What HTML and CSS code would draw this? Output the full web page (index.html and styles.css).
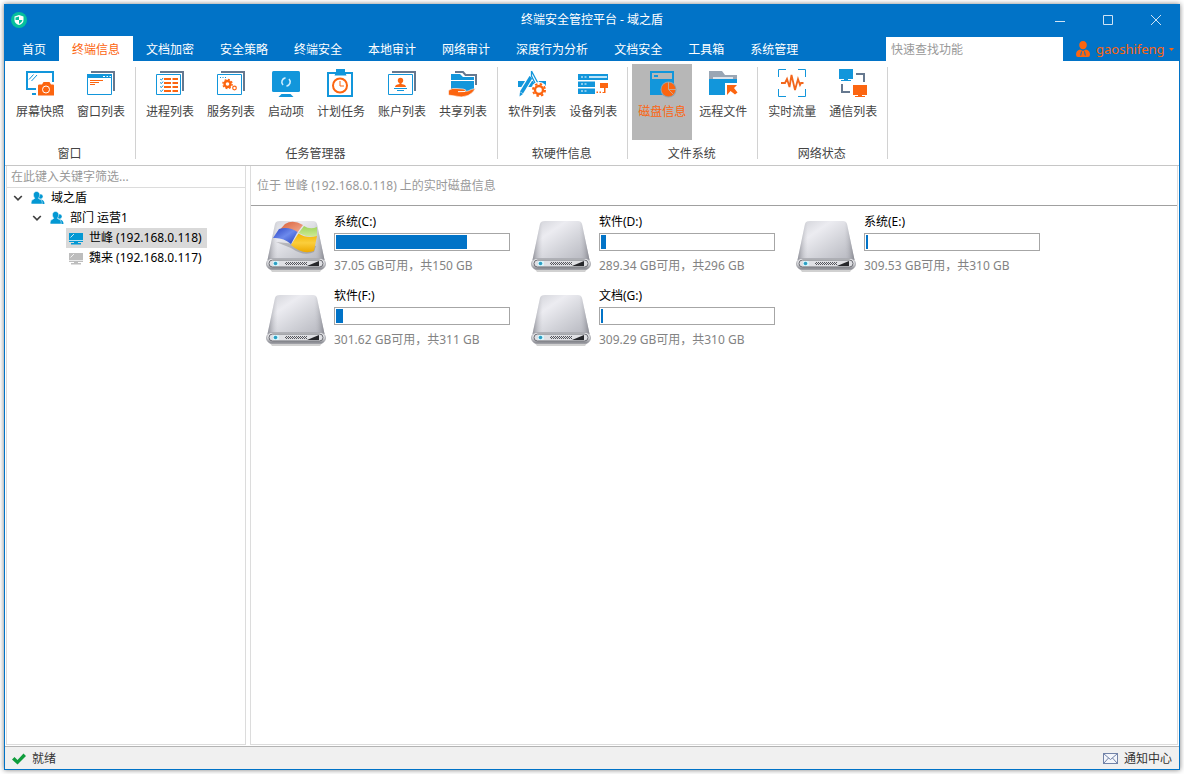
FILE: index.html
```html
<!DOCTYPE html>
<html lang="zh-CN">
<head>
<meta charset="utf-8">
<title>终端安全管控平台 - 域之盾</title>
<link rel="stylesheet" href="styles.css">
</head>
<body>
<svg class="defs" aria-hidden="true">
  <defs>
    <linearGradient id="metal" x1="0" y1="0" x2="1" y2="1">
      <stop offset="0" stop-color="#cfd0d6"/><stop offset=".3" stop-color="#ececf1"/><stop offset=".6" stop-color="#d3d4da"/><stop offset="1" stop-color="#b4b5bd"/>
    </linearGradient>
    <linearGradient id="side" x1="0" y1="0" x2="1" y2="0">
      <stop offset="0" stop-color="#8d8e96"/><stop offset=".18" stop-color="#c4c5cb" stop-opacity="0"/><stop offset=".82" stop-color="#c4c5cb" stop-opacity="0"/><stop offset="1" stop-color="#85868e"/>
    </linearGradient>
    <linearGradient id="front" x1="0" y1="0" x2="0" y2="1">
      <stop offset="0" stop-color="#f4f4f6"/><stop offset=".5" stop-color="#d5d6da"/><stop offset="1" stop-color="#808188"/>
    </linearGradient>
    <linearGradient id="wr" x1="0" y1="0" x2="1" y2="1"><stop offset="0" stop-color="#d95f38"/><stop offset="1" stop-color="#f3b096"/></linearGradient>
    <linearGradient id="wg" x1="0" y1="0" x2="0" y2="1"><stop offset="0" stop-color="#9fd35c"/><stop offset="1" stop-color="#cdea94"/></linearGradient>
    <linearGradient id="wb" x1="0" y1="0" x2="1" y2="1"><stop offset="0" stop-color="#2a44c4"/><stop offset=".5" stop-color="#6d8aec"/><stop offset="1" stop-color="#2440bd"/></linearGradient>
    <linearGradient id="wy" x1="0" y1="0" x2="0" y2="1"><stop offset="0" stop-color="#f0b400"/><stop offset=".5" stop-color="#fbce3c"/><stop offset="1" stop-color="#eda900"/></linearGradient>
    <pattern id="mesh" width="2" height="2" patternUnits="userSpaceOnUse"><rect width="1" height="1" fill="#55565c"/><rect x="1" y="1" width="1" height="1" fill="#55565c"/></pattern>
    <symbol id="drive" viewBox="0 0 60 54">
      <path d="M3 50h54l-3 4H6z" fill="#000" opacity=".18"/>
      <path d="M11 3.500Q11.500 3 14 3H47Q50 3 51 6L58.500 42H1.500L9 6Q9.500 4 11 3.500z" fill="url(#metal)"/>
      <path d="M11 3.500Q11.500 3 14 3H47Q50 3 51 6L58.500 42H1.500L9 6Q9.500 4 11 3.500z" fill="url(#side)"/>
      <rect x=".5" y="40.500" width="59" height="11" rx="5.500" fill="url(#front)" stroke="#9a9ba2" stroke-width=".7"/>
      <rect x="3" y="42" width="54" height="7" rx="3.500" fill="#dfe0e4" stroke="#6d6e75" stroke-width="1"/>
      <rect x="7" y="43" width="6" height="5" rx="1" fill="#d8f5fb"/><circle cx="9.500" cy="45.500" r="1.800" fill="#2a9fc4"/>
      <rect x="19" y="44" width="22" height="3" fill="url(#mesh)"/>
      <path d="M41 48L53 43V48z" fill="#26272b"/>
    </symbol>
    <symbol id="users" viewBox="0 0 14 14">
      <circle cx="9.500" cy="5.500" r="2.300" fill="#0398d3"/><path d="M8 8.500Q13.500 8 13.500 13H8z" fill="#0398d3"/>
      <path d="M5.500 .500C7.600 .500 8.800 2 8.700 4C8.600 5.600 7.800 6.600 7.400 7.200C7.600 8.300 11.200 8.200 11.200 11.400V13H.200V11.400C.200 8.200 3.600 8.300 3.800 7.200C3.200 6.600 2.400 5.500 2.400 4C2.400 2 3.600 .500 5.500 .500z" fill="#0398d3" stroke="#fff" stroke-width=".5"/>
    </symbol>
    <symbol id="pc" viewBox="0 0 14 13">
      <path d="M0 1H14V9H0z" fill="currentColor"/><path d="M1.500 5.500L5 2" stroke="#fff" stroke-width="1" opacity=".8"/><path d="M0 8.500H14" stroke="#fff" stroke-width="1" opacity=".7"/>
      <path d="M0 9H14V10H9V11H12V12.500H2V11H5V10H0z" fill="currentColor"/>
    </symbol>
    <symbol id="chev" viewBox="0 0 10 8"><path d="M1.200 2L5 5.800L8.800 2" fill="none" stroke="#404040" stroke-width="1.700"/></symbol>
  </defs>
</svg>
<div class="window">
  <header class="top">
    <div class="titlebar">
      <svg class="logo" width="16" height="16" viewBox="0 0 16 16" aria-hidden="true"><circle cx="8" cy="8" r="8" fill="#05bf9c"/><path d="M8 3L12.500 4.500V8Q12.500 11.500 8 13Q3.500 11.500 3.500 8V4.500z" fill="#fff"/><path d="M8 4.600V8H4.500V5.600zM8 8H11.500Q11 10.500 8 12z" fill="#05bf9c"/></svg>
      <h1 class="title">终端安全管控平台 - 域之盾</h1>
      <div class="winbtns">
        <button class="winbtn" aria-label="最小化"><svg width="10" height="10" viewBox="0 0 10 10"><path d="M0 6.500H10"/></svg></button>
        <button class="winbtn" aria-label="最大化"><svg width="10" height="10" viewBox="0 0 10 10"><path d="M.500 .500H9.500V9.500H.500z"/></svg></button>
        <button class="winbtn" aria-label="关闭"><svg width="10" height="10" viewBox="0 0 10 10"><path d="M0 0L10 10M10 0L0 10"/></svg></button>
      </div>
    </div>
    <div class="menubar">
      <nav class="tabs">
        <button class="tab">首页</button><button class="tab active">终端信息</button><button class="tab">文档加密</button><button class="tab">安全策略</button><button class="tab">终端安全</button><button class="tab">本地审计</button><button class="tab">网络审计</button><button class="tab">深度行为分析</button><button class="tab">文档安全</button><button class="tab">工具箱</button><button class="tab">系统管理</button>
      </nav>
      <input class="search" type="text" placeholder="快速查找功能" aria-label="快速查找功能">
      <button class="user">
        <svg width="14" height="16" viewBox="0 0 14 16" aria-hidden="true"><path d="M7 0C9.400 0 10.800 1.700 10.800 4C10.800 6 9.500 8.300 7 8.300S3.200 6 3.200 4C3.200 1.700 4.600 0 7 0z" fill="#fc6510"/><path d="M4 8.500L7 10L10 8.500Q14 9.500 14 13.500Q14 16 12 16H2Q0 16 0 13.500Q0 9.500 4 8.500z" fill="#fc6510"/><path d="M5.500 10.500L4.700 14.500M8.500 10.500L9.300 14.500" stroke="#0173c7" stroke-width="1"/></svg>
        <span>gaoshifeng</span>
        <svg class="caret" width="5" height="3" viewBox="0 0 5 3" aria-hidden="true"><path d="M0 0H5L2.500 3z" fill="#fc6510"/></svg>
      </button>
    </div>
  </header>

  <div class="ribbon">
    <section class="group">
      <div class="tools">
        <button class="tool"><svg class="ico" viewBox="0 0 32 32"><path d="M3 23V5H29V15M2 22H12" class="b2"/><path d="M8 27H12" class="b2"/><path d="M5 12.500L9.500 7.500M7.500 14L13 8" class="b1"/><path d="M15.500 17.500H18L19.500 15H25.500L27 17.500H29Q30 17.500 30 18.500V28.500H14V18.500Q14 17.500 15.500 17.500z" class="fo"/><circle cx="22" cy="22.500" r="3.500" class="w1"/></svg><span>屏幕快照</span></button>
        <button class="tool"><svg class="ico" viewBox="0 0 32 32"><path d="M6 5H29V24" class="g2"/><path d="M2.500 7.500H26.500V27.500H2.500z" class="b1 fw"/><path d="M2 7H27V11H2z" class="fb"/><path d="M18 9.500H20M21.500 9.500H23M24.500 9.500H26" class="w1"/><path d="M5 13.500H18M5 15.500H14M5 17.500H10" class="o1"/></svg><span>窗口列表</span></button>
      </div>
      <h2 class="glabel">窗口</h2>
    </section>
    <section class="group">
      <div class="tools">
        <button class="tool"><svg class="ico" viewBox="0 0 32 32"><path d="M6 5H29V24" class="g2"/><path d="M2.500 7.500H26.500V27.500H2.500z" class="b1 fw"/><path d="M6 12L7.500 13L9 11M6 15.500L7.500 16.500L9 14.500M6 19.500L7.500 20.500L9 18.500M6 23.500L7.500 24.500L9 22.500" class="b1"/><path d="M10 12H17M18.500 12H24M10 16H17M18.500 16H24M10 20H17M18.500 20H24M10 24H17M18.500 24H24" class="o2"/></svg><span>进程列表</span></button>
        <button class="tool"><svg class="ico" viewBox="0 0 32 32"><path d="M6 5H29V24" class="g2"/><path d="M2.500 7.500H26.500V27.500H2.500z" class="b1 fw"/><path d="M5 10.500H6M7.500 10.500H8.500M10 10.500H11" class="b1"/><circle cx="12.500" cy="17" r="3" fill="none" stroke="#fc6510" stroke-width="2.400"/><circle cx="12.500" cy="17" r="4.600" fill="none" stroke="#fc6510" stroke-width="1.400" stroke-dasharray="1.800 1.810"/><circle cx="19.500" cy="21" r="1.800" fill="none" stroke="#fc6510" stroke-width="1.200"/></svg><span>服务列表</span></button>
        <button class="tool"><svg class="ico" viewBox="0 0 32 32"><rect x="2" y="4" width="28" height="21" rx="1.500" class="fb"/><path d="M13 18A4.200 4.200 0 0 1 15.500 10.900M19 12A4.200 4.200 0 0 1 16.500 19.100" fill="none" stroke="#cfeeff" stroke-width="1.600"/><path d="M11.500 27H20.500L23.500 30H8.500z" class="fb"/></svg><span>启动项</span></button>
        <button class="tool"><svg class="ico" viewBox="0 0 32 32"><path d="M3 6H27V29H3z" class="b2"/><path d="M9.500 8.500L11 5V2H20V5L21.500 8.500z" class="fb"/><circle cx="15" cy="18.500" r="7" class="o2"/><path d="M15 14V19H19" class="o1"/></svg><span>计划任务</span></button>
        <button class="tool"><svg class="ico" viewBox="0 0 32 32"><path d="M6 5H29V24" class="g2"/><path d="M2.500 7.500H26.500V27.500H2.500z" class="b1 fw"/><circle cx="14.500" cy="13.500" r="2.700" class="fo"/><path d="M13.500 15H15.500V17Q20 17.500 20 20H9Q9 17.500 13.500 17z" class="fo"/><path d="M8 21.500H21M11 23.500H18" class="b1"/></svg><span>账户列表</span></button>
        <button class="tool"><svg class="ico" viewBox="0 0 32 32"><path d="M8 5H16L18.500 8H29V18" class="g2"/><path d="M4 7H13L16 10H27V13H4zM4 14H27V24L22 26H4z" class="fb"/><path d="M1.500 23.500Q5 20.500 10 21.500L16 22Q20 22.500 18 24.300L21 24Q24 22 28.500 21.500Q26 26 21 28.500Q15 31 8 29L1.500 28z" fill="#fc6510" stroke="#fff" stroke-width=".6"/><path d="M11 24.700L18 24.500" class="w1"/></svg><span>共享列表</span></button>
      </div>
      <h2 class="glabel">任务管理器</h2>
    </section>
    <section class="group">
      <div class="tools">
        <button class="tool"><svg class="ico" viewBox="0 0 32 32"><path d="M2 14H30V20H2z" class="fb"/><path d="M3.500 28.500L15 10" stroke="#fff" stroke-width="6"/><path d="M5.500 25.500L15 10" stroke="#1296db" stroke-width="3.600"/><path d="M3.500 29.500L4 25L7 27z" class="fb"/><path d="M16 6L24 23" stroke="#fff" stroke-width="5"/><path d="M15.500 4V9L22 22M15.500 4L24 20" fill="none" stroke="#1296db" stroke-width="1.300"/><circle cx="23" cy="23" r="8" fill="#fff"/><circle cx="23" cy="23" r="4" fill="none" stroke="#fc6510" stroke-width="2.400"/><circle cx="23" cy="23" r="6" fill="none" stroke="#fc6510" stroke-width="2" stroke-dasharray="2.400 2.312"/></svg><span>软件列表</span></button>
        <button class="tool"><svg class="ico" viewBox="0 0 32 32"><path d="M1 7H31V13H1zM1 14.500H18V20H1zM1 21.500H18V27H1z" class="fb"/><path d="M4 10H6M7.500 10H9.500M4 17H6M7.500 17H9.500M4 24H6M7.500 24H9.500" class="w1"/><path d="M12 10H30" stroke="#bfe5f8" stroke-width="2"/><path d="M23 16H31V21H28.500V26H25.500V25H27V21H23zM19.500 24.500H21V26H19.500zM22.500 24.500H24V26H22.500z" class="fo"/></svg><span>设备列表</span></button>
      </div>
      <h2 class="glabel">软硬件信息</h2>
    </section>
    <section class="group">
      <div class="tools">
        <button class="tool selected"><svg class="ico" viewBox="0 0 32 32"><path d="M5 5H27V14H5z" class="b2"/><path d="M4 12H28V28H4z" class="fb"/><path d="M8 8H12V10H8z" class="fb"/><circle cx="22.500" cy="22.500" r="8" fill="#8fa3b0"/><circle cx="22.500" cy="22.500" r="7" class="fo"/><path d="M22.500 15V22.500L27.500 27.500M22.500 22.500H30" fill="none" stroke="#c9a690" stroke-width="1"/></svg><span>磁盘信息</span></button>
        <button class="tool"><svg class="ico" viewBox="0 0 32 32"><path d="M2 4H15L18 8H30V12H26V10H6V12H2z" fill="#9aa6b4"/><path d="M6 10H26V12H6z" fill="#dfe4ea"/><path d="M2 12H30V28H2z" class="fb"/><path d="M18 16H30V28H18z" class="fw"/><path d="M20 18H30L27 21L30.500 25.500L28 27.500L23.500 24L20 28z" class="fo"/></svg><span>远程文件</span></button>
      </div>
      <h2 class="glabel">文件系统</h2>
    </section>
    <section class="group">
      <div class="tools">
        <button class="tool"><svg class="ico" viewBox="0 0 32 32"><path d="M2.500 10V2.500H10M22 2.500H29.500V10M29.500 22V29.500H22M10 29.500H2.500V22" class="b1"/><path d="M5 16H9L11 12L13.500 20L15.500 8L19 23L22 12L24 18L25 16H27.500" fill="none" stroke="#f2661c" stroke-width="1.800"/></svg><span>实时流量</span></button>
        <button class="tool"><svg class="ico" viewBox="0 0 32 32"><path d="M2 2H16V12H11V13H14V14H4V13H7V12H2z" class="fb"/><path d="M19 7H27V15M5 17V25H13" class="g2"/><path d="M16 18H30V28H25V29H28V30H18V29H21V28H16z" class="fo"/></svg><span>通信列表</span></button>
      </div>
      <h2 class="glabel">网络状态</h2>
    </section>
  </div>

  <main class="main">
    <aside class="side">
      <input class="filter" type="text" placeholder="在此键入关键字筛选..." aria-label="筛选">
      <ul class="tree">
        <li class="row"><svg class="chev"><use href="#chev"/></svg><svg class="users"><use href="#users"/></svg><span>域之盾</span></li>
        <li class="row lv2"><svg class="chev"><use href="#chev"/></svg><svg class="users"><use href="#users"/></svg><span>部门 运营1</span></li>
        <li class="row lv3"><button class="node on"><svg class="pc"><use href="#pc"/></svg>世峰 (192.168.0.118)</button></li>
        <li class="row lv3"><button class="node off"><svg class="pc"><use href="#pc"/></svg>魏来 (192.168.0.117)</button></li>
      </ul>
    </aside>
    <section class="content">
      <h2 class="crumb">位于 世峰 (192.168.0.118) 上的实时磁盘信息</h2>
      <div class="disks">
        <article class="disk">
          <svg class="drive" viewBox="0 0 60 54"><use href="#drive"/>
            <path d="M10 24L25 30Q38 39 48 34L50 28z" fill="#555" opacity=".3"/>
            <path d="M19 6Q27 1 37 7L31 15Q24 9 13.500 12z" fill="url(#wr)"/>
            <path d="M38 8Q44 12 51 9L51 18Q42 20 32.500 15z" fill="url(#wg)"/>
            <path d="M13 11Q23 8 31.500 14L25 26Q17 19 7 20z" fill="url(#wb)"/>
            <path d="M32.500 15.500Q41 21 51 18L48 33Q36 37 25 27z" fill="url(#wy)"/></svg>
          <div class="info"><h3 class="name">系统(C:)</h3><div class="bar"><div class="fill" style="width:76%"></div></div><p class="cap">37.05 GB可用，共150 GB</p></div>
        </article>
        <article class="disk">
          <svg class="drive"><use href="#drive"/></svg>
          <div class="info"><h3 class="name">软件(D:)</h3><div class="bar"><div class="fill" style="width:3%"></div></div><p class="cap">289.34 GB可用，共296 GB</p></div>
        </article>
        <article class="disk">
          <svg class="drive"><use href="#drive"/></svg>
          <div class="info"><h3 class="name">系统(E:)</h3><div class="bar"><div class="fill" style="width:1%"></div></div><p class="cap">309.53 GB可用，共310 GB</p></div>
        </article>
        <article class="disk">
          <svg class="drive"><use href="#drive"/></svg>
          <div class="info"><h3 class="name">软件(F:)</h3><div class="bar"><div class="fill" style="width:4%"></div></div><p class="cap">301.62 GB可用，共311 GB</p></div>
        </article>
        <article class="disk">
          <svg class="drive"><use href="#drive"/></svg>
          <div class="info"><h3 class="name">文档(G:)</h3><div class="bar"><div class="fill" style="width:1%"></div></div><p class="cap">309.29 GB可用，共310 GB</p></div>
        </article>
      </div>
    </section>
  </main>

  <footer class="status">
    <span class="ready"><svg width="14" height="12" viewBox="0 0 14 12" aria-hidden="true"><path d="M0 6.500L2.500 4L5.500 7L11.500 .500L14 3L5.500 11.500z" fill="#0f9d3c"/></svg>就绪</span>
    <button class="notice"><svg width="15" height="11" viewBox="0 0 15 11" aria-hidden="true"><rect x=".5" y=".5" width="14" height="10" fill="#f4f6fb" stroke="#7283a8"/><path d="M1 1L7.500 6.500L14 1M1 10L5.500 5M14 10L9.500 5" fill="none" stroke="#7283a8"/></svg>通知中心</button>
  </footer>
</div>
</body>
</html>
```

FILE: styles.css
```css
* { box-sizing: border-box; }
body {
  margin: 0;
  padding: 4px;
  background: #fff;
  font: 12px/16px "Noto Sans", "Noto Sans CJK SC", sans-serif;
  color: #000;
}
button, input {
  font: inherit;
  color: inherit;
  margin: 0;
  padding: 0;
  border: 0;
  border-radius: 0;
  background: none;
  outline: 0;
}
h1, h2, h3, p, ul { margin: 0; padding: 0; font: inherit; list-style: none; }
svg { display: block; flex: none; }
.defs { position: absolute; width: 0; height: 0; }

.window {
  display: flex;
  flex-direction: column;
  min-height: calc(100vh - 8px);
  border: 1px solid #0173c7;
  border-top: 0;
  box-shadow: 0 0 5px rgba(0, 0, 0, .5);
}

.top { background: #0173c7; color: #fff; }
.titlebar {
  display: grid;
  grid-template-columns: 1fr auto 1fr;
  align-items: center;
  height: 32px;
}
.logo { margin-left: 6px; }
.winbtns { display: flex; justify-content: flex-end; }
.winbtn { width: 48px; height: 32px; padding-left: 2px; display: flex; align-items: center; justify-content: center; }
.winbtn svg { fill: none; stroke: #cfe3f4; stroke-width: 1; }

.menubar { display: flex; align-items: flex-end; height: 25px; padding-left: 4px; }
.tabs { display: flex; flex: 1; }
.tab { height: 25px; padding: 2px 13px 0; white-space: nowrap; }
.tab.active { background: #fff; color: #fc6510; }
.search { width: 177px; height: 24px; padding: 0 5px; background: #fff; color: #333; }
.search::placeholder, .filter::placeholder { color: #999; opacity: 1; }
.user {
  display: flex;
  align-items: center;
  gap: 6px;
  width: 116px;
  height: 24px;
  padding-left: 13px;
  font-size: 13px;
  color: #fc6510;
}
.user .caret { margin-left: -2px; }

.ribbon {
  display: flex;
  height: 105px;
  padding: 3px 0 0 1px;
  background: #fff;
  border-bottom: 1px solid #c6c6c6;
  color: #444;
}
.group {
  display: flex;
  flex-direction: column;
  justify-content: space-between;
  height: 98px;
  padding: 0 5px 0 4px;
  background: linear-gradient(#d2d2d2, #d2d2d2) right 3px / 1px 92px no-repeat;
}
.tools { display: flex; gap: 1px; }
.tool {
  display: flex;
  flex-direction: column;
  align-items: center;
  gap: 5px;
  height: 76px;
  padding: 3px 6px;
  white-space: nowrap;
}
.tool.selected { background: #b7b7b7; color: #fc6510; }
.glabel { padding-right: 2px; text-align: center; }
.ico { width: 32px; height: 32px; }
.b1 { fill: none; stroke: #1296db; stroke-width: 1; }
.b2 { fill: none; stroke: #1296db; stroke-width: 2; }
.g2 { fill: none; stroke: #66788f; stroke-width: 2; }
.o1 { fill: none; stroke: #fc6510; stroke-width: 1; }
.o2 { fill: none; stroke: #fc6510; stroke-width: 2; }
.w1 { fill: none; stroke: #fff; stroke-width: 1; }
.fb { fill: #1296db; }
.fo { fill: #fc6510; }
.fw { fill: #fff; }

.main { display: flex; flex: 1; gap: 4px; padding: 0 1px 1px; background: #fff; }
.side { width: 240px; border: 1px solid #dcdcdc; border-top: 0; }
.filter { width: 100%; height: 22px; padding: 0 4px; border-bottom: 1px solid #dcdcdc; display: block; }
.row { display: flex; align-items: center; height: 20px; padding-left: 6px; }
.lv2 { padding-left: 25px; }
.lv3 { padding-left: 59px; }
.chev { width: 10px; height: 8px; margin-right: 8px; }
.users { width: 14px; height: 14px; margin-right: 6px; }
.node { display: flex; align-items: center; gap: 6px; height: 20px; padding: 0 5px 0 3px; white-space: nowrap; }
.node.on { background: #d9d9d9; }
.pc { width: 14px; height: 13px; color: #0398d3; }
.off .pc { color: #bdbdbd; }

.content { flex: 1; border: 1px solid #dcdcdc; border-top: 0; }
.crumb { height: 40px; padding: 12px 6px; border-bottom: 1px solid #a0a0a0; color: #999; }
.disks {
  display: grid;
  grid-template-columns: repeat(auto-fill, 244px);
  gap: 14px 21px;
  padding: 8px 15px;
}
.disk { display: flex; gap: 8px; height: 60px; }
.drive { width: 60px; height: 54px; margin-top: 4px; }
.info { flex: 1; }
.bar { height: 18px; margin: 3px 0 7px; padding: 1px; border: 1px solid #a6a6a6; }
.fill { height: 100%; background: #0173c7; }
.cap { color: #838383; white-space: nowrap; }

.status {
  display: flex;
  align-items: center;
  justify-content: space-between;
  height: 23px;
  padding: 1px 7px 0;
  border-top: 1px solid #b4b4b4;
  background: #f0f0f0;
  color: #333;
}
.ready, .notice { display: flex; align-items: center; gap: 6px; }
```
